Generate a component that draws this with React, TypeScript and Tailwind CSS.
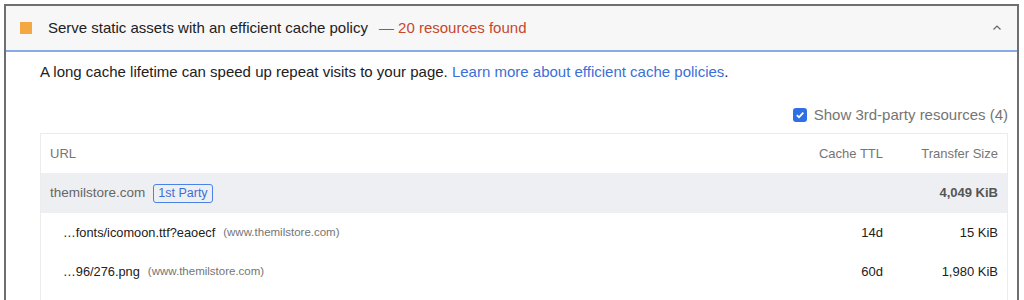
import React from "react";

export default function App() {
  const rows = [
    { url: "…fonts/icomoon.ttf?eaoecf", host: "(www.themilstore.com)", ttl: "14d", size: "15 KiB" },
    { url: "…96/276.png", host: "(www.themilstore.com)", ttl: "60d", size: "1,980 KiB" },
  ];
  return (
    <div
      className="w-[1024px] h-[300px] bg-white overflow-hidden pt-[4px] pl-[4px] pr-[5px]"
      style={{ fontFamily: '"Liberation Sans", Arial, sans-serif' }}
    >
      <div className="border-l-2 border-t-2 border-r-2 border-[#6f6f6f] h-[400px] bg-white">
        <div className="h-[44px] bg-[#f8f7f8] border-b-2 border-[#8aa9e6] box-content flex items-center pl-[14px] pr-[14px]">
          <div className="w-[12px] h-[12px] bg-[#f3a842]" />
          <div className="ml-[16px] text-[15px] text-[#212121]">Serve static assets with an efficient cache policy</div>
          <div className="ml-[11px] text-[15px] text-[#c5472c]">— 20 resources found</div>
          <div className="ml-auto">
            <svg width="12" height="12" viewBox="0 0 12 12">
              <path d="M2.5 7.5 L6 4 L9.5 7.5" fill="none" stroke="#666" strokeWidth="1.2" />
            </svg>
          </div>
        </div>
        <div className="pl-[34px] pr-[9px]">
          <div className="mt-[10px] text-[15px] text-[#212121] leading-[20px]">
            A long cache lifetime can speed up repeat visits to your page.{" "}
            <span className="text-[#3b6fd8]">Learn more about efficient cache policies</span>.
          </div>
          <div className="mt-[24px] flex justify-end items-center gap-[7px] text-[15px] text-[#757575] h-[18px]">
            <div className="w-[14px] h-[14px] rounded-[3px] bg-[#2f6fe6] flex items-center justify-center">
              <svg width="10" height="10" viewBox="0 0 10 10">
                <path d="M1.8 5.2 L4 7.3 L8.3 2.6" fill="none" stroke="white" strokeWidth="1.8" />
              </svg>
            </div>
            <span>Show 3rd-party resources (4)</span>
          </div>
          <div className="mt-[9px] border border-[#ececec] text-[13px] h-[200px]">
            <div className="h-[39px] flex items-center px-[9px] text-[#757575]">
              <div className="flex-1">URL</div>
              <div className="w-[120px] text-right">Cache TTL</div>
              <div className="w-[115px] text-right">Transfer Size</div>
            </div>
            <div className="h-[40px] flex items-center px-[9px] bg-[#eeeff2] text-[#666]">
              <div className="flex-1 flex items-center">
                <span className="text-[13.5px]">themilstore.com</span>
                <span className="ml-[8px] border border-[#4a82e8] rounded-[3px] text-[#3b6fd8] px-[4px] h-[19px] leading-[17px] text-[12.5px]">1st Party</span>
              </div>
              <div className="w-[120px] text-right" />
              <div className="w-[115px] text-right font-bold text-[#555]">4,049 KiB</div>
            </div>
            {rows.map((r, i) => (
              <div key={i} className="h-[39px] flex items-center pl-[22px] pr-[9px] text-[#212121]">
                <div className="flex-1 flex items-center">
                  <span className="text-[12.8px]">{r.url}</span>
                  <span className="ml-[8px] text-[11.5px] text-[#757575]">{r.host}</span>
                </div>
                <div className="w-[120px] text-right">{r.ttl}</div>
                <div className="w-[115px] text-right">{r.size}</div>
              </div>
            ))}
          </div>
        </div>
      </div>
    </div>
  );
}
